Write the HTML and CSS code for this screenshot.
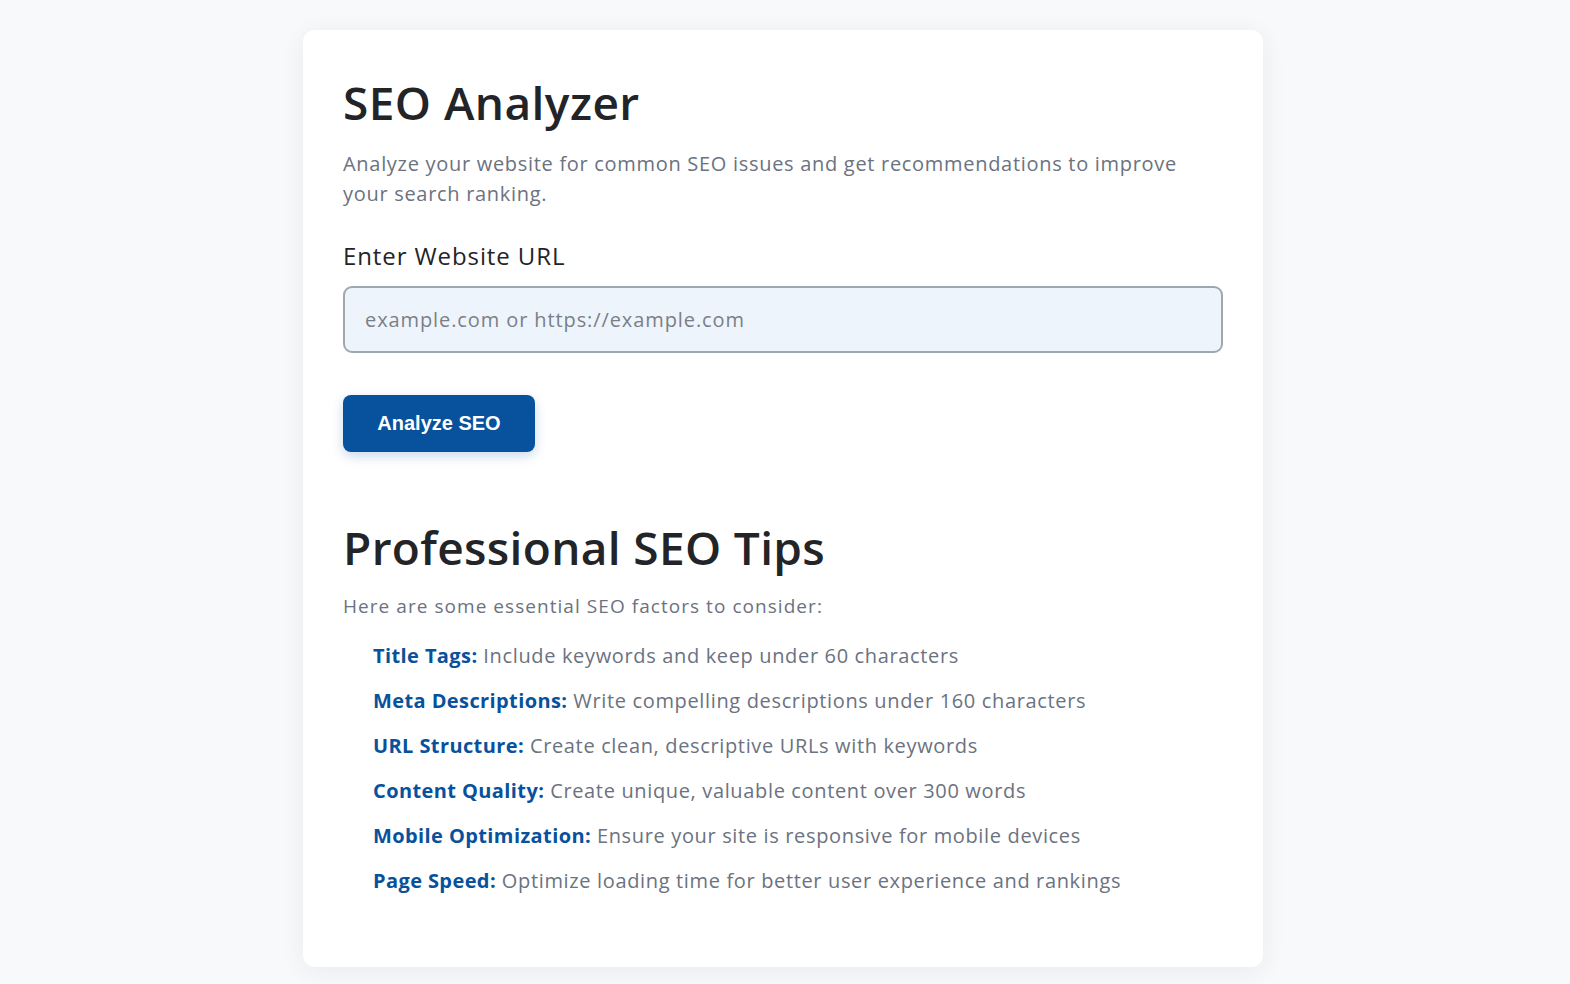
FILE: index.html
```html
<!DOCTYPE html>
<html lang="en">
<head>
<meta charset="utf-8">
<title>SEO Analyzer</title>
<link rel="stylesheet" href="styles.css">
</head>
<body>
<main class="page">
  <section class="card">
    <h1 class="title">SEO Analyzer</h1>
    <p class="lead">Analyze your website for common SEO issues and get recommendations to improve your search ranking.</p>
    <label class="field-label" for="url">Enter Website URL</label>
    <input class="url-input" id="url" type="text" placeholder="example.com or https://example.com">
    <button class="analyze-btn" type="button">Analyze SEO</button>

    <h2 class="tips-title">Professional SEO Tips</h2>
    <p class="tips-intro">Here are some essential SEO factors to consider:</p>
    <ul class="tips">
      <li><strong>Title Tags:</strong> Include keywords and keep under 60 characters</li>
      <li><strong>Meta Descriptions:</strong> Write compelling descriptions under 160 characters</li>
      <li><strong>URL Structure:</strong> Create clean, descriptive URLs with keywords</li>
      <li><strong>Content Quality:</strong> Create unique, valuable content over 300 words</li>
      <li><strong>Mobile Optimization:</strong> Ensure your site is responsive for mobile devices</li>
      <li><strong>Page Speed:</strong> Optimize loading time for better user experience and rankings</li>
    </ul>
  </section>
</main>
</body>
</html>
```

FILE: styles.css
```css
* { box-sizing: border-box; }

html, body {
  margin: 0;
  padding: 0;
  background: #f8f9fb;
}

body {
  font-family: "Open Sans", "Noto Sans", sans-serif;
  color: #222428;
}

.page {
  display: flex;
  justify-content: center;
  padding: 30px 4px 19px 0;
}

.card {
  width: 960px;
  background: #ffffff;
  border-radius: 12px;
  box-shadow: 0 4px 24px rgba(30, 40, 60, 0.07);
  padding: 45px 40px 71px;
  display: flex;
  flex-direction: column;
  align-items: flex-start;
}

.title {
  margin: 0;
  font-size: 46px;
  line-height: 1.2;
  font-weight: 600;
  color: #222428;
  letter-spacing: 0.45px;
}

.lead {
  margin: 19px 0 0;
  font-size: 20px;
  line-height: 30px;
  color: #6b7280;
  letter-spacing: 0.7px;
}

.field-label {
  margin-top: 31px;
  font-size: 24px;
  line-height: 32px;
  font-weight: 500;
  color: #222428;
  letter-spacing: 0.9px;
}

.url-input {
  margin-top: 14px;
  width: 100%;
  height: 67px;
  border: 2px solid #a1a7b0;
  border-radius: 9px;
  background: #eef4fc;
  padding: 0 20px;
  font-family: inherit;
  font-size: 20px;
  letter-spacing: 0.9px;
  color: #222428;
  outline: none;
}

.url-input::placeholder {
  color: #7a7f87;
}

.analyze-btn {
  margin-top: 42px;
  width: 192px;
  height: 57px;
  border: 0;
  border-radius: 8px;
  background: #08519c;
  color: #ffffff;
  font-family: "Liberation Sans", Arial, sans-serif;
  font-size: 20px;
  font-weight: 700;
  box-shadow: 0 4px 12px rgba(8, 81, 156, 0.22);
  cursor: pointer;
}

.tips-title {
  margin: 68px 0 0;
  font-size: 46px;
  line-height: 1.2;
  font-weight: 600;
  color: #222428;
  letter-spacing: 0.35px;
}

.tips-intro {
  margin: 16px 0 0;
  font-size: 19px;
  line-height: 30px;
  color: #6b7280;
  letter-spacing: 1.05px;
}

.tips {
  list-style: none;
  margin: 20px 0 0;
  padding: 0 0 0 30px;
  display: flex;
  flex-direction: column;
  gap: 15px;
}

.tips li {
  font-size: 20px;
  line-height: 30px;
  color: #6b7280;
  letter-spacing: 0.65px;
}

.tips strong {
  color: #08519c;
  font-weight: 700;
  letter-spacing: 0.4px;
}
```
